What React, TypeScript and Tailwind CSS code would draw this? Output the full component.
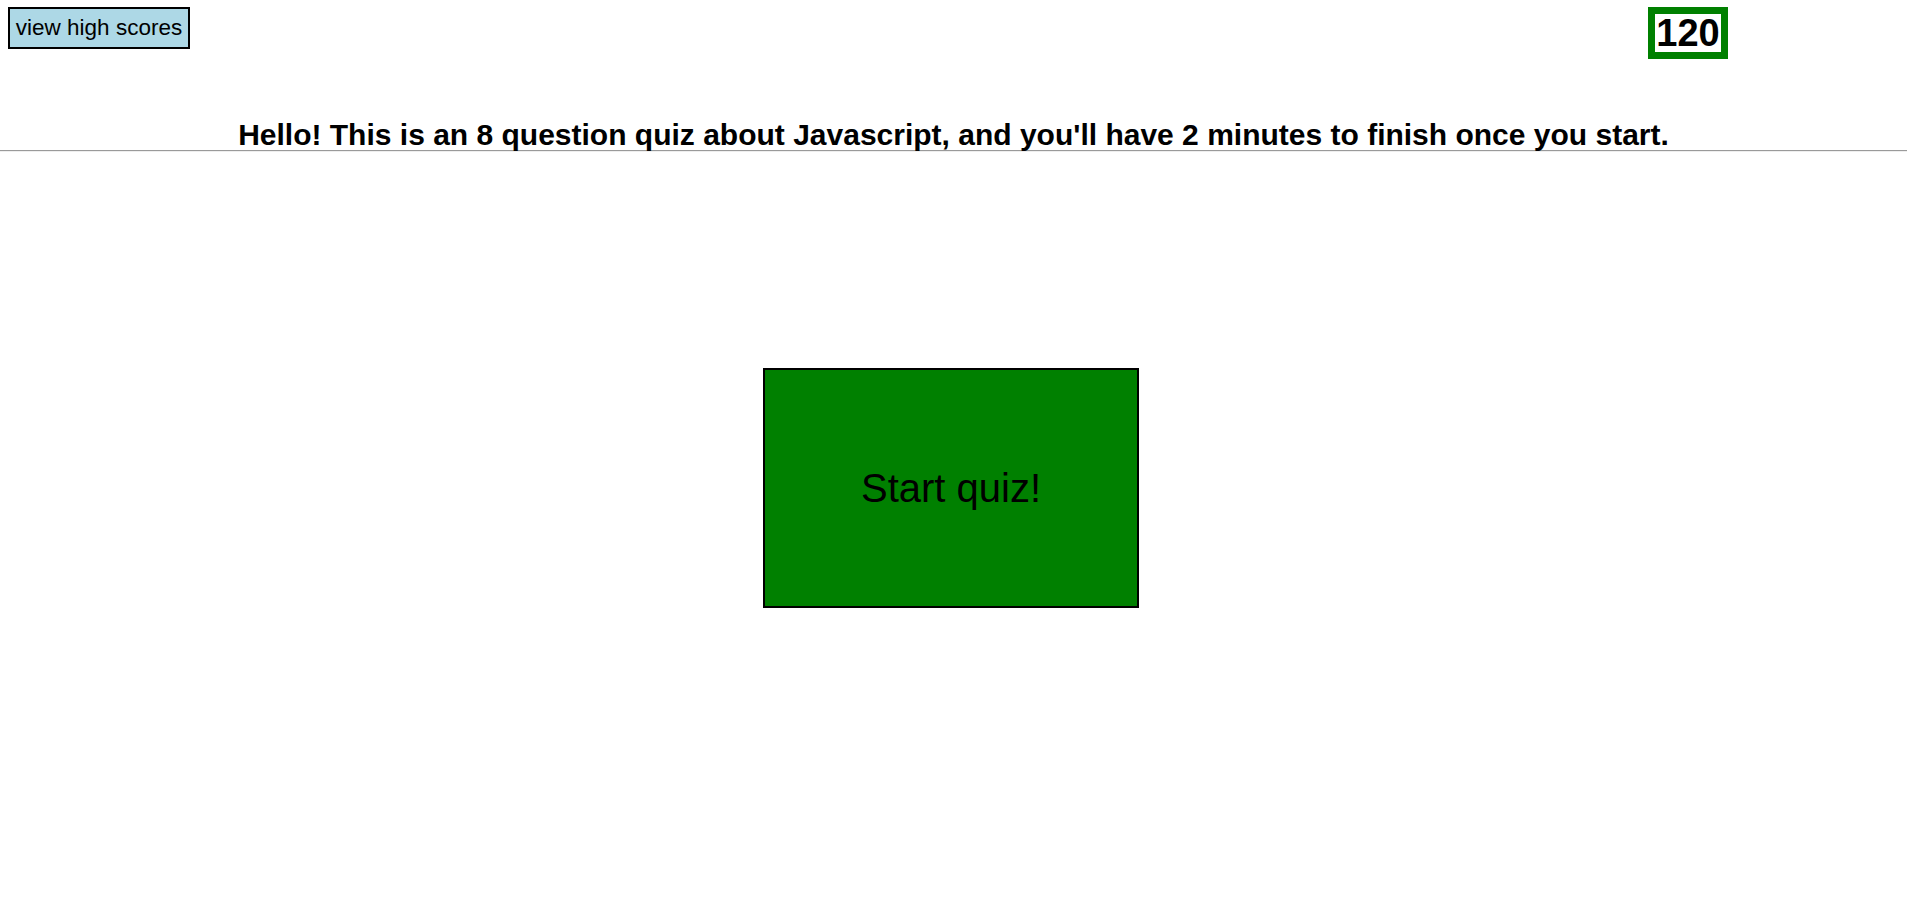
export default function App() {
  return (
    <main className="min-h-screen bg-white text-black font-['Liberation_Sans',Arial,sans-serif]">
      <header className="flex items-start justify-between pl-[8px] pt-[7px] pr-[179px]">
        <button className="h-[42px] w-[182px] border-2 border-black bg-[#add8e6] text-[22.5px] leading-none">
          view high scores
        </button>
        <div className="flex h-[52px] w-[80px] items-center justify-center border-[7px] border-[#008000] text-[38px] font-bold leading-none">
          120
        </div>
      </header>

      <h2 className="mt-[60px] text-center text-[30px] font-bold leading-[31px]">
        Hello! This is an 8 question quiz about Javascript, and you'll have 2 minutes to finish once you start.
      </h2>
      <div className="border-t border-b border-t-[#9a9a9a] border-b-[#eeeeee]" />

      <div className="mt-[216px] flex justify-center pr-[5px]">
        <button className="h-[240px] w-[376px] border-2 border-black bg-[#008000] text-[40px]">
          Start quiz!
        </button>
      </div>
    </main>
  );
}
